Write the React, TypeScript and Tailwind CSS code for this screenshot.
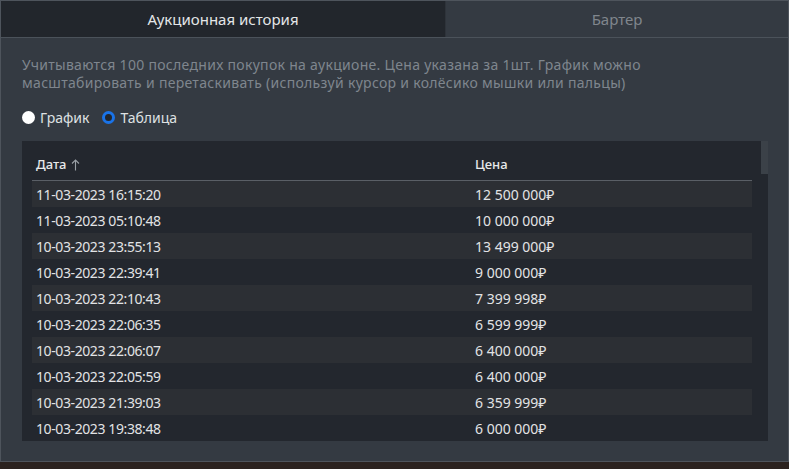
const ROWS = [
  ['11-03-2023 16:15:20', '12 500 000₽'],
  ['11-03-2023 05:10:48', '10 000 000₽'],
  ['10-03-2023 23:55:13', '13 499 000₽'],
  ['10-03-2023 22:39:41', '9 000 000₽'],
  ['10-03-2023 22:10:43', '7 399 998₽'],
  ['10-03-2023 22:06:35', '6 599 999₽'],
  ['10-03-2023 22:06:07', '6 400 000₽'],
  ['10-03-2023 22:05:59', '6 400 000₽'],
  ['10-03-2023 21:39:03', '6 359 999₽'],
  ['10-03-2023 19:38:48', '6 000 000₽'],
];

function Radio({ checked, label }: { checked?: boolean; label: string }) {
  return (
    <label className="flex items-center gap-[5px]">
      {checked ? (
        <span className="w-[13px] h-[13px] rounded-full border-[3px] border-[#1a73e8] bg-[#22262c]" />
      ) : (
        <span className="w-[13px] h-[13px] rounded-full bg-white" />
      )}
      <span>{label}</span>
    </label>
  );
}

export default function App() {
  return (
    <div
      className="w-[789px] h-[469px] bg-[#2b221f] overflow-hidden"
      style={{ fontFamily: '"Noto Sans", "Open Sans", sans-serif' }}
    >
      <div className="h-[462px] bg-[#343a42] border border-[#4e545c] flex flex-col">
        <div className="flex h-[37px] border-b border-[#4b525a]">
          <div className="w-[445px] bg-[#22262c] flex items-center justify-center text-[15px] text-[#e4e6e8] border-r border-[#2e333a]">
            Аукционная история
          </div>
          <div className="flex-1 flex items-center justify-center text-[15px] text-[#80868d]">
            Бартер
          </div>
        </div>

        <div className="px-[21px] pt-[18px] flex flex-col flex-1">
          <p className="text-[14px] leading-[18px] tracking-[0.3px] text-[#7f868e] w-[700px]">
            Учитываются 100 последних покупок на аукционе. Цена указана за 1шт. График можно
            <br />
            масштабировать и перетаскивать (используй курсор и колёсико мышки или пальцы)
          </p>

          <div className="flex items-center gap-[13px] mt-[15px] text-[14px] text-[#dfe1e3]">
            <Radio label="График" />
            <Radio checked label="Таблица" />
          </div>

          <div className="mt-[13px] h-[300px] w-[746px] bg-[#23272e] flex">
            <div className="flex-1 pl-[10px] pr-[9px] pt-[10px]">
              <div className="flex h-[30px] items-start pt-[4px] border-b border-[#5a5f66] text-[13px] text-[#e8e9ea] font-medium">
                <div className="w-[443px] pl-[4px] flex items-center gap-[4px]">
                  Дата
                  <svg width="9" height="12" viewBox="0 0 9 12" fill="none" stroke="#9aa0a6" strokeWidth="1.1">
                    <path d="M4.5 11.5V1M1 4.5L4.5 1L8 4.5" />
                  </svg>
                </div>
                <div>Цена</div>
              </div>
              {ROWS.map(([date, price], i) => (
                <div
                  key={date + i}
                  className={`flex h-[26px] items-center text-[14px] text-[#e2e3e5] ${i % 2 === 0 ? 'bg-[#2c2f34]' : ''}`}
                >
                  <div className="w-[443px] pl-[4px] tracking-[-0.4px]">{date}</div>
                  <div>{price}</div>
                </div>
              ))}
            </div>
            <div className="w-[7px] flex flex-col">
              <div className="h-[33px] bg-[#3b4148]" />
            </div>
          </div>
        </div>
      </div>
    </div>
  );
}
